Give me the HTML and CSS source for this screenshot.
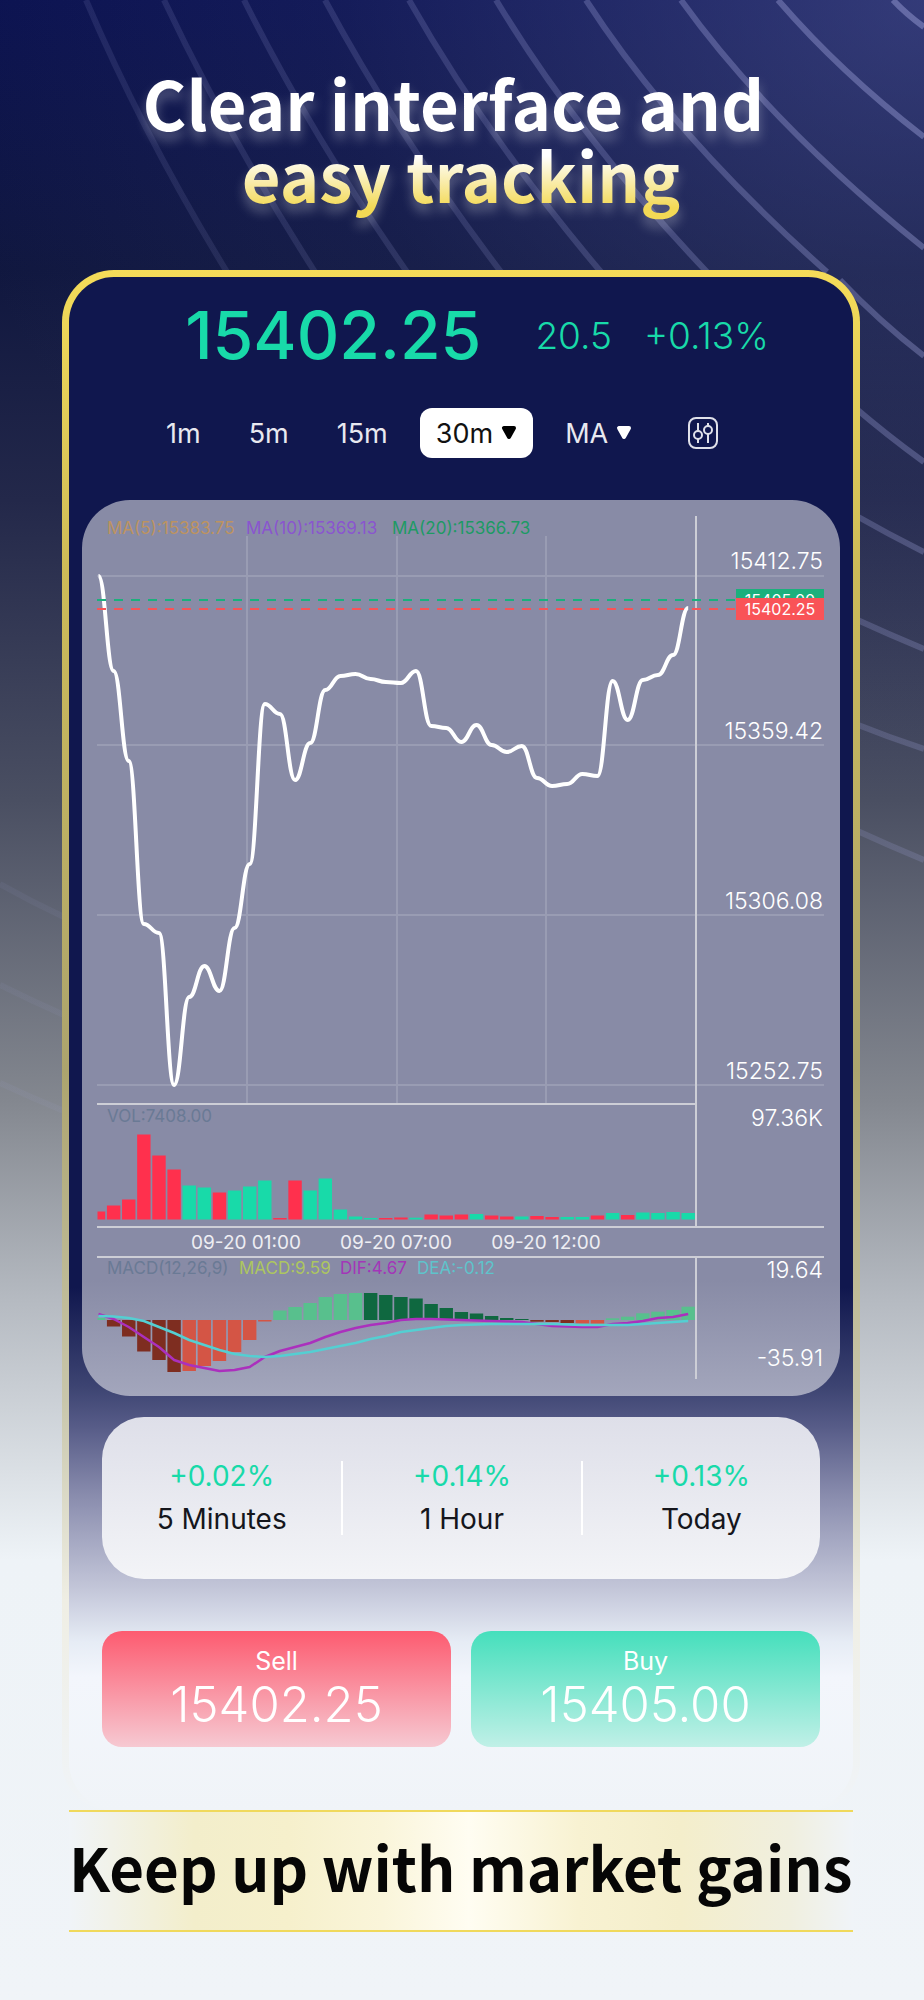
FILE: index.html
```html
<!DOCTYPE html>
<html lang="en">
<head>
    <meta charset="UTF-8">
    <meta name="viewport" content="width=device-width, initial-scale=1.0">
    <title>Market tracking</title>
    <link rel="stylesheet" href="styles.css">
</head>
<body>

    <svg class="rays" viewBox="0 0 924 2000" preserveAspectRatio="none" aria-hidden="true">
        <defs>
            <linearGradient id="rayFade" gradientUnits="userSpaceOnUse" x1="924" y1="0" x2="100" y2="500">
                <stop offset="0" stop-color="#a4a8e0" stop-opacity="0.45"/>
                <stop offset="0.5" stop-color="#a4a8e0" stop-opacity="0.18"/>
                <stop offset="1" stop-color="#a4a8e0" stop-opacity="0.07"/>
            </linearGradient>
        </defs>
        <g fill="none" stroke="url(#rayFade)" stroke-width="6">
            <path d="M86 0Q144 136 227 272"/>
            <path d="M164 0Q228 136 315 272"/>
            <path d="M244 0Q312 136 407 272"/>
            <path d="M325 0Q398 136 501 272"/>
            <path d="M409 0Q486 136 601 272"/>
            <path d="M496 0Q578 136 707 272"/>
            <path d="M586 0Q674 136 827 272"/>
            <path d="M681 0Q770 124 924 248"/>
            <path d="M778 0Q840 72 924 137"/>
            <path d="M893 0Q906 14 924 27"/>
            <path d="M840 280Q880 322 924 356"/>
            <path d="M853 406Q888 436 924 462"/>
            <path d="M853 514Q888 534 924 552"/>
            <path d="M853 618Q888 634 924 649"/>
            <path d="M853 723Q888 737 924 749"/>
            <path d="M853 829Q888 845 924 860"/>
            <path d="M0 884Q32 902 64 917"/>
            <path d="M0 985Q32 1001 64 1015"/>
            <path d="M0 1083Q32 1098 64 1111"/>
        </g>
    </svg>

    <h1 class="headline">Clear interface and&nbsp;<br>easy tracking</h1>

    <main class="phone">
        <div class="quote">
            <span class="quote-price">15402.25</span>
            <span class="quote-change">20.5</span>
            <span class="quote-change">+0.13%</span>
        </div>

        <div class="toolbar">
            <button type="button" class="tab">1m</button>
            <button type="button" class="tab">5m</button>
            <button type="button" class="tab">15m</button>
            <button type="button" class="tab active">30m
                <svg class="arrow" viewBox="0 0 16 16"><path d="M3 3H13L8 12Z"/></svg>
            </button>
            <button type="button" class="tab">MA
                <svg class="arrow" viewBox="0 0 16 16"><path d="M3 3H13L8 12Z"/></svg>
            </button>
            <button type="button" class="tab settings" aria-label="Indicators">
                <svg viewBox="0 0 30 32">
                    <rect x="1" y="1" width="28" height="30" rx="7"/>
                    <path d="M10 6V14M10 22V26M20 6V9M20 17V26"/>
                    <circle cx="10" cy="18" r="4"/>
                    <circle cx="20" cy="13" r="4"/>
                </svg>
            </button>
        </div>

        <section class="chart">
            <svg id="chart" viewBox="82 501 758 896">
                <g class="grid">
                    <path d="M97 577H824M97 746H824M97 916H824M97 1086H824"/>
                    <path d="M247 537V1105M397 537V1105M546 537V1105"/>
                </g>
                <g class="axis">
                    <path d="M696 517V1228M696 1258V1380M97 1105H696M97 1228H824M97 1258H824"/>
                </g>
                <g id="bars"></g>
                <g id="lines"></g>
                <path class="bid" stroke="#1bb07c" d="M97 601H737"/>
                <path class="bid" stroke="#f95357" d="M97 610H737"/>

                <g class="legend">
                    <text x="107" y="535" fill="#bd9360">MA(5):15383.75</text>
                    <text x="246" y="535" fill="#8a55cf">MA(10):15369.13</text>
                    <text x="392" y="535" fill="#1d9a64">MA(20):15366.73</text>
                    <text x="107" y="1123" fill="#6a7a95">VOL:7408.00</text>
                    <text x="107" y="1275" fill="#6a7a95">MACD(12,26,9)</text>
                    <text x="239" y="1275" fill="#adc660">MACD:9.59</text>
                    <text x="340" y="1275" fill="#a336b8">DIF:4.67</text>
                    <text x="417" y="1275" fill="#5fc3cb">DEA:-0.12</text>
                </g>
                <g class="scale">
                    <text x="823" y="570">15412.75</text>
                    <text x="823" y="740">15359.42</text>
                    <text x="823" y="910">15306.08</text>
                    <text x="823" y="1080">15252.75</text>
                    <text x="823" y="1127">97.36K</text>
                    <text x="823" y="1279">19.64</text>
                    <text x="823" y="1367">-35.91</text>
                </g>
                <g class="dates">
                    <text x="246" y="1250">09-20 01:00</text>
                    <text x="396" y="1250">09-20 07:00</text>
                    <text x="546" y="1250">09-20 12:00</text>
                </g>
                <g class="tags">
                    <rect x="736" y="590" width="88" height="22" fill="#1bb07c"/>
                    <text x="780" y="607">15405.00</text>
                    <rect x="736" y="599" width="88" height="22" fill="#f95357"/>
                    <text x="780" y="616">15402.25</text>
                </g>
            </svg>
        </section>

        <section class="stats">
            <div class="stat"><span class="up">+0.02%</span><span>5 Minutes</span></div>
            <div class="stat"><span class="up">+0.14%</span><span>1 Hour</span></div>
            <div class="stat"><span class="up">+0.13%</span><span>Today</span></div>
        </section>

        <div class="orders">
            <button type="button" class="order sell"><span>Sell</span><span class="order-price">15402.25</span></button>
            <button type="button" class="order buy"><span>Buy</span><span class="order-price">15405.00</span></button>
        </div>
    </main>

    <p class="banner">Keep up with market gains</p>

    <script src="chart.js"></script>
</body>
</html>
```

FILE: styles.css
```css
* {
    box-sizing: border-box;
}

body {
    font-family: Inter, 'Liberation Sans', sans-serif;
    margin: 0;
    padding: 66px 71px 68px 69px;
    position: relative;
    overflow-x: hidden;
    background:
        radial-gradient(1000px 800px at 100% 0, rgba(100, 108, 170, 0.45), rgba(70, 78, 140, 0.15) 60%, rgba(70, 78, 140, 0) 100%) no-repeat,
        linear-gradient(#0b1250 0, #10173f 270px, #23284a 500px, #4a4f62 800px, #83878f 1100px, #b5bac1 1300px, #eef3f7 1560px, #f0f4f8 100%);
}

button {
    font-family: inherit;
    border: none;
    cursor: pointer;
}

.rays {
    position: absolute;
    top: 0;
    left: 0;
    width: 100%;
    height: 2000px;
    z-index: -1;
}

.headline {
    margin: 0 0 40px;
    padding-bottom: 20px;
    font-family: 'Noto Sans CJK SC', sans-serif;
    font-size: 67px;
    font-weight: 700;
    line-height: 72px;
    text-align: center;
    color: transparent;
    background: linear-gradient(#fff 0, #fff 90px, #f3d955 142px);
    background-clip: text;
    -webkit-background-clip: text;
    filter: drop-shadow(0 8px 6px rgba(255, 255, 255, 0.3));
}

.phone {
    position: relative;
    margin: 0 -7px;
    padding: 7px 20px 63px;
    border-radius: 52px 52px 48px 48px;
    background: linear-gradient(#f5dc59 0, #cdbb58 300px, #aca46e 800px, #c8c6ab 1130px, #efeee4 1330px, #f0f4f8 1540px);
}

/* inner screen, leaves a 7px frame around it */
.phone::before {
    content: "";
    position: absolute;
    inset: 7px 7px 0;
    border-radius: 45px 45px 48px 48px;
    background: linear-gradient(#10174e 0, #10174e 1010px, #3d4472 1110px, #575c88 1150px, #8a8dae 1220px, #c2c5d8 1310px, #e6ecf5 1365px, #f3f6fc 1400px, #f0f4f8 100%);
}

.phone > * {
    position: relative;
}

.quote {
    display: flex;
    align-items: center;
    justify-content: center;
    gap: 32px;
    height: 116px;
    padding-left: 32px;
    color: #18daa9;
}

.quote-price {
    font-size: 66px;
    font-weight: 500;
    margin-right: 22px;
}

.quote-change {
    font-size: 37px;
    font-weight: 300;
}

.toolbar {
    display: flex;
    align-items: center;
    gap: 16px;
    height: 52px;
    margin: 14px 68px 41px;
}

.tab {
    display: flex;
    align-items: center;
    gap: 8px;
    height: 50px;
    padding: 0 16px;
    border-radius: 12px;
    background: none;
    color: #e8e9f0;
    font-size: 27px;
}

.tab.active {
    background: #fff;
    color: #111;
}

.arrow {
    width: 16px;
    height: 16px;
    fill: #fff;
    stroke: #fff;
    stroke-width: 4;
    stroke-linejoin: round;
}

.active .arrow {
    fill: #000;
    stroke: #000;
}

.settings {
    margin-left: 8px;
}

.settings svg {
    width: 30px;
    height: 32px;
    fill: none;
    stroke: #e0e1ea;
    stroke-width: 2;
}

.chart {
    border-radius: 48px;
    background: linear-gradient(#888ba6 0, #888ba6 780px, #a3a6bc 100%);
}

.chart svg {
    display: block;
    width: 100%;
}

.grid {
    fill: none;
    stroke: #999cb3;
    stroke-width: 2;
}

.axis {
    fill: none;
    stroke: #cdced6;
    stroke-width: 2;
}

.bid {
    stroke-width: 2;
    stroke-dasharray: 9 8;
}

.legend {
    font-size: 17px;
}

.scale {
    font-size: 23px;
    font-weight: 300;
    fill: #fff;
    text-anchor: end;
}

.dates {
    font-size: 19px;
    fill: #eeeef3;
    text-anchor: middle;
}

.tags {
    font-size: 16px;
    text-anchor: middle;
}

.tags text {
    fill: #fff;
}

.stats {
    display: grid;
    grid-template-columns: repeat(3, 1fr);
    margin: 21px 20px 52px;
    padding: 44px 0;
    border-radius: 42px;
    background: linear-gradient(#dedfe9, #f3f4f7);
    font-size: 28px;
}

.stat {
    display: flex;
    flex-direction: column;
    align-items: center;
    justify-content: center;
    height: 74px;
    line-height: 43px;
    color: #15161c;
}

.stat + .stat {
    border-left: 2px solid #fff;
}

.up {
    color: #18daa9;
}

.orders {
    display: grid;
    grid-template-columns: 1fr 1fr;
    gap: 20px;
    margin: 0 20px;
}

.order {
    display: flex;
    flex-direction: column;
    align-items: center;
    justify-content: center;
    height: 116px;
    padding: 0;
    border-radius: 20px;
    color: #fff;
    font-size: 25px;
    line-height: 32px;
}

.order-price {
    font-size: 49px;
    font-weight: 300;
    line-height: 56px;
}

.sell {
    background: linear-gradient(#fd5b70, #f6c9d2);
}

.buy {
    background: linear-gradient(#45dfbc, #c0f0e7);
}

.banner {
    margin: 0;
    padding-bottom: 10px;
    border-top: 2px solid #f0d95c;
    border-bottom: 2px solid #f0d95c;
    background: linear-gradient(90deg, #f0f4f8 0, #f3eecb 16%, #f6f0cc 28%, #faf5da 40%, #fffdf2 51%, #f8f2d2 65%, #f4eecb 78%, #f0efdf 92%, #f0f4f8 100%);
    font-family: 'Noto Sans CJK SC', sans-serif;
    font-size: 60px;
    font-weight: 700;
    line-height: 108px;
    white-space: nowrap;
    color: #060606;
}
```

FILE: chart.js
```js
const START = 98.5;
const STEP = 15.12;
const NS = 'http://www.w3.org/2000/svg';

const price = [577, 672, 762, 925, 934, 1086, 998, 967, 992, 929, 865, 705, 715, 781, 744, 691, 677, 675, 680, 683,
    684, 672, 727, 729, 743, 726, 746, 753, 747, 779, 787, 785, 775, 777, 682, 721, 681, 676, 656, 609];

// negative = red
const volume = [-8, -14, -20, -85, -64, -50, 34, 32, -27, 29, 33, 39, -1.5, -39, 29, 41, 10, 3, 1.5, -1.5,
    -2, 1.8, -5, -4, -5, 5.5, -4, -3, 3, -3.5, -2.5, 2.5, 2.5, -4, 6.5, -4.5, 7, 6.5, 7.5, 6.5];

const macd = [2, -6.5, -16.5, -31.5, -40, -52, -51, -46, -41, -32, -20, -1.5, 9.5, 13, 17, 23, 26, 27, 27, 25,
    23, 21.5, 16, 12, 8, 6.5, 4, 2, 1, -1.7, -2, -3, -3.5, -3.7, 1.7, 3.3, 6.7, 8.3, 10, 13.3];

const dif = [1315, 1320, 1328, 1338, 1348, 1361, 1366, 1369, 1372, 1371, 1368, 1358, 1352, 1348, 1344, 1338, 1333, 1329, 1326, 1324,
    1321, 1320, 1320, 1320.5, 1321, 1321.5, 1322, 1322.5, 1323, 1325, 1327, 1327.5, 1328, 1328, 1325, 1324, 1322, 1319, 1318, 1315];

const dea = [1317, 1317.5, 1319, 1322, 1328, 1334, 1341, 1346, 1351, 1355, 1357, 1358, 1357, 1355, 1353, 1350, 1347, 1344, 1340, 1337,
    1333, 1331, 1329, 1327, 1326, 1325.5, 1325, 1325, 1325, 1325, 1325, 1325.5, 1326, 1326, 1326, 1326, 1325, 1324, 1323, 1322];

function addBar(i, base, value, color) {
    const rect = document.createElementNS(NS, 'rect');
    const left = Math.max(97.5, START + STEP * i - 6.7);
    rect.setAttribute('x', left);
    rect.setAttribute('y', value > 0 ? base - value : base);
    rect.setAttribute('width', START + STEP * i + 6.7 - left);
    rect.setAttribute('height', Math.abs(value));
    rect.setAttribute('fill', color);
    document.getElementById('bars').appendChild(rect);
}

function addLine(values, color, width, smooth) {
    let d = 'M' + START + ' ' + values[0];
    for (let i = 1; i < values.length; i++) {
        const x = START + STEP * i;
        if (smooth) {
            d += 'C' + (x - STEP * 0.55) + ' ' + values[i - 1] + ' ' + (x - STEP * 0.45) + ' ' + values[i] + ' ' + x + ' ' + values[i];
        } else {
            d += 'L' + x + ' ' + values[i];
        }
    }
    const path = document.createElementNS(NS, 'path');
    path.setAttribute('d', d);
    path.setAttribute('fill', 'none');
    path.setAttribute('stroke', color);
    path.setAttribute('stroke-width', width);
    path.setAttribute('stroke-linejoin', 'round');
    document.getElementById('lines').appendChild(path);
}

volume.forEach(function(v, i) {
    addBar(i, 1220.5, Math.abs(v), v > 0 ? '#18daa9' : '#ff304d');
});

macd.forEach(function(v, i) {
    const falling = i > 0 && v < macd[i - 1] || i === 18;
    const color = v > 0 ? (falling ? '#0f6840' : '#58c08d') : (falling && i < 32 ? '#7e2d20' : '#d45545');
    addBar(i, 1321, v, color);
});

addLine(price, '#fff', 4, true);
addLine(dif, '#ab30bd', 2.5, false);
addLine(dea, '#54cfd2', 2.5, false);
```
